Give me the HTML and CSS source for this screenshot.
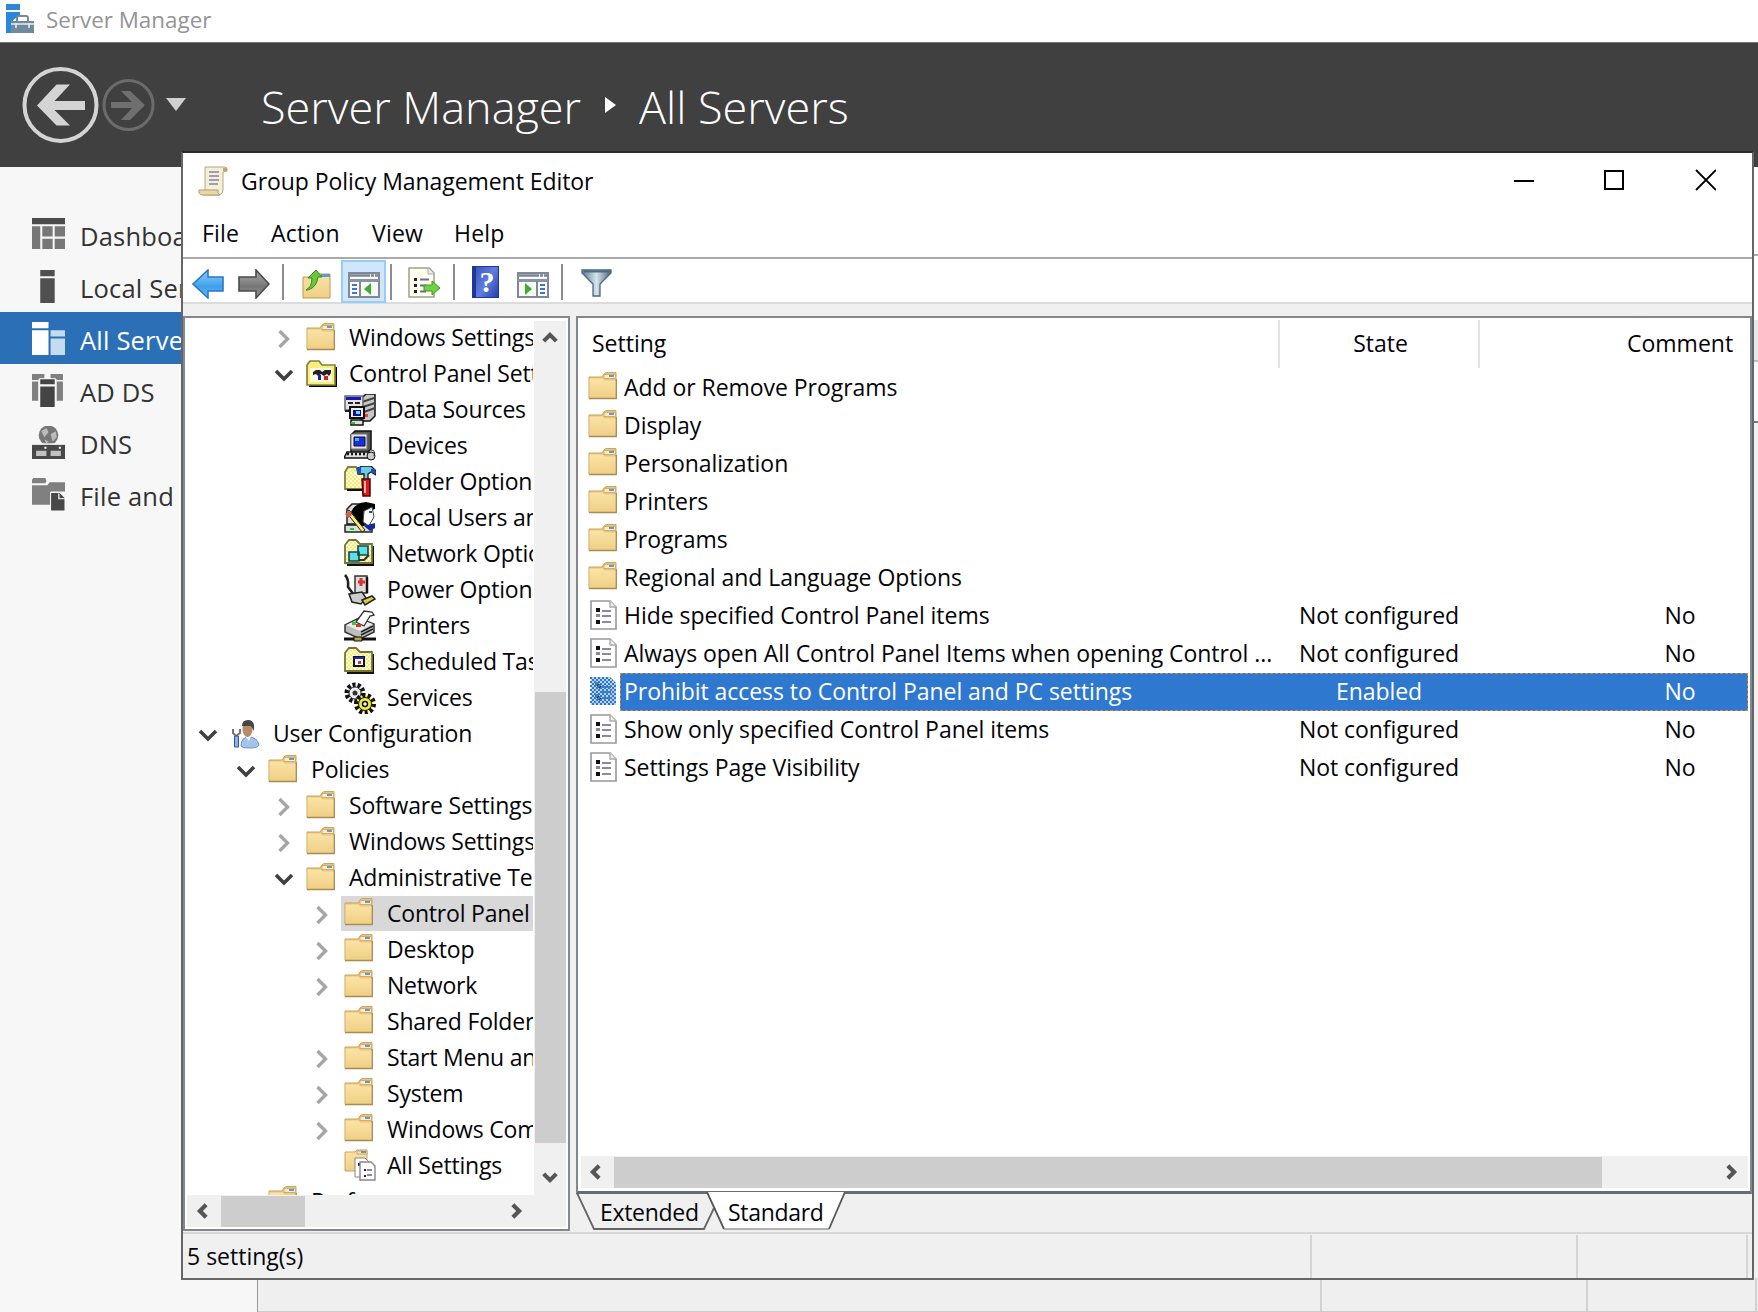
FILE: index.html
```html
<!DOCTYPE html>
<html lang="en">
<head>
<meta charset="utf-8">
<title>Server Manager</title>
<link rel="stylesheet" href="styles.css">
</head>
<body>
<svg class="defs" width="0" height="0" aria-hidden="true">
  <defs>
    <linearGradient id="g-folder" x1="0" y1="0" x2="0" y2="1"><stop offset="0" stop-color="#fbe3a6"/><stop offset="1" stop-color="#efcf85"/></linearGradient>
    <linearGradient id="g-blue" x1="0" y1="0" x2="0" y2="1"><stop offset="0" stop-color="#8fd0fb"/><stop offset=".6" stop-color="#3f9fea"/><stop offset="1" stop-color="#62c0f5"/></linearGradient>
    <linearGradient id="g-gray" x1="0" y1="0" x2="0" y2="1"><stop offset="0" stop-color="#a8a8a8"/><stop offset=".6" stop-color="#777"/><stop offset="1" stop-color="#999"/></linearGradient>
    <linearGradient id="g-funnel" x1="0" y1="0" x2="1" y2="0"><stop offset="0" stop-color="#5b7890"/><stop offset=".5" stop-color="#d5e4ee"/><stop offset="1" stop-color="#48637a"/></linearGradient>
    <pattern id="p-dots" width="4" height="4" patternUnits="userSpaceOnUse"><path fill="#f4ef72" d="M0 0h4v4H0z"/><path fill="#fffde0" d="M0 0h2v2H0zM2 2h2v2H2z"/></pattern>
    <pattern id="p-sel" width="4" height="4" patternUnits="userSpaceOnUse"><path fill="#2f78d0" d="M0 0h2v2H0zM2 2h2v2H2z"/></pattern>
    <symbol id="i-folder" viewBox="0 0 32 32"><path d="M1 6h13l2-3q1-1.500 3-1.500h9v26H1z" fill="#e8c67c" stroke="#c9a55e"/><path d="M16 3.500h11.500v4H16z" fill="#f8edd2" stroke="#d6ad62"/><path d="M21 4h5v2h-5z" fill="#5b9bd6"/><path d="M1.500 7.500h13l2 2h11.500V27H1.500z" fill="url(#g-folder)"/><path d="M28.300 8v19.500H1" fill="none" stroke="#a98b55" stroke-width="1.300"/></symbol>
    <symbol id="i-right" viewBox="0 0 20 20"><path d="M5.500 2l8 8-8 8" fill="none" stroke="#a6a6a6" stroke-width="3.400"/></symbol>
    <symbol id="i-down" viewBox="0 0 20 20"><path d="M2 6l8 8 8-8" fill="none" stroke="#404040" stroke-width="3.600"/></symbol>
    <symbol id="i-scroll" viewBox="0 0 20 20"><path d="M3 13.500l7-7 7 7" fill="none" stroke="#555" stroke-width="4.600"/></symbol>
    <symbol id="i-cpanel" viewBox="0 0 32 32"><path d="M3 29h28V9h-2v18H3z" fill="#000"/><path d="M1 7l3-4h9l3 4h13v20H1z" fill="#f4ef80" stroke="#84803a" stroke-width="1.700"/><path d="M4 10h22v14H4z" fill="#fffbd8"/><path d="M7 17v-3l3-2h4l2 2 3-2h6v3l-2 3-2-2-3 2-3-2-3 2-2-2z" fill="#222"/><path d="M12 17h3v5h-3z" fill="#1c1cc4"/><path d="M18 18h4v4h-4z" fill="#d81e1e"/></symbol>
    <symbol id="i-data" viewBox="0 0 32 32"><path d="M18 4l4-4h9v22l-5 5h-9z" fill="#c7c7c7" stroke="#111" stroke-width="1.500"/><path d="M18 8l12-4M19 13l12-4M20 18l11-4" stroke="#444" stroke-width="2"/><path d="M1 2h18v14H1z" fill="#e4e4e4" stroke="#666" stroke-width="1.500"/><path d="M2 3h15v3H2z" fill="#1818b8"/><path d="M4 9h5M11 9h5M1 17h8" stroke="#222" stroke-width="2"/><path d="M6 13h14v11H6z" fill="#eee" stroke="#111" stroke-width="2"/><path d="M9 16h8v6H9z" fill="#0a0a9a"/><path d="M12 17h4v3h-4z" fill="#5fe6f2"/><path d="M7 26h12v5H7z" fill="#ddd" stroke="#111" stroke-width="1.500"/><path d="M7 28h4v2H7z" fill="#2c2"/><path d="M21 20h3v3h-3z" fill="#f33"/></symbol>
    <symbol id="i-device" viewBox="0 0 32 32"><path d="M7 5l4-4h16v18l-4 4H7z" fill="#555" stroke="#111" stroke-width="1.500"/><path d="M7 4h16v15H7z" fill="#e4e4e4" stroke="#777"/><path d="M10 7h11v9H10z" fill="#1530e8" stroke="#112"/><path d="M11 8h4v3h-4z" fill="#58a8ff"/><path d="M3 22h22l2 6H0z" fill="#ddd" stroke="#111" stroke-width="1.500"/><path d="M3 24h23" stroke="#111" stroke-width="2.500" stroke-dasharray="2 2"/><circle cx="27" cy="26" r="4" fill="#ccc" stroke="#111"/><path d="M27 20q5 0 3 6" fill="none" stroke="#222"/></symbol>
    <symbol id="i-foldopt" viewBox="0 0 32 32"><path d="M1 6l3-5h8l3 4h7v18H1z" fill="url(#p-dots)" stroke="#84803a" stroke-width="1.800"/><path d="M3 24h17" stroke="#111" stroke-width="2"/><path d="M13 3l5-3h9l5 5v4l-5-3-3 2v6h-4V8h-6z" fill="#6ccbe4" stroke="#111" stroke-width="1.300"/><path d="M13 1h4v7h-4zM27 3h4v4h-4z" fill="#1c50c0"/><path d="M18 13h8v17h-7z" fill="#d51d1d" stroke="#500" stroke-width="1.500"/><path d="M21 15v12" stroke="#faa" stroke-width="2"/></symbol>
    <symbol id="i-users" viewBox="0 0 32 32"><path d="M3 7l5-5h14v20H3zM1 23h27v7H1z" fill="#ddd" stroke="#222" stroke-width="1.500"/><path d="M7 10q4-9 15-10l9 2v5l-8 3-3 14q-8-1-9-9z" fill="#000"/><path d="M20 9l8-4 2 10-3 5-2 4-6-4z" fill="#fff" stroke="#444"/><path d="M25 9h3v2h-3z" fill="#24c"/><path d="M20 24l11-3v5l-5 3z" fill="#122a9c"/><path d="M2 10l3-2 16 20-3 2z" fill="#f6ee67" stroke="#222"/><path d="M1 12l4-3 3 4-4 3z" fill="#d35a5a"/><path d="M6 26h4v2H6z" fill="#2c2"/></symbol>
    <symbol id="i-netopt" viewBox="0 0 32 32"><path d="M3 28h27V8h-3v16H3z" fill="#111"/><path d="M1 7l4-5h7l4 4h12v19H1z" fill="url(#p-dots)" stroke="#74743a" stroke-width="1.800"/><path d="M14 8h10v9H14zM5 14h10v9H5z" fill="#5fe0de" stroke="#145" stroke-width="1.600"/><path d="M15 22h5l5-5" fill="none" stroke="#333" stroke-width="2"/></symbol>
    <symbol id="i-power" viewBox="0 0 32 32"><path d="M1 1q4 4 3 12l6 8" fill="none" stroke="#222" stroke-width="2.600"/><path d="M11 2h12v17H11z" fill="#ddd" stroke="#333" stroke-width="1.500"/><path d="M23 3v16" stroke="#111" stroke-width="2.500"/><path d="M17 4v8M14 8h7" stroke="#e03030" stroke-width="3"/><path d="M5 20l13-2 4 6-5 6-9-2z" fill="#ccc" stroke="#222" stroke-width="1.500"/><path d="M18 26l10-4 3 3-10 6z" fill="#d7cd3d" stroke="#222" stroke-width="1.500"/></symbol>
    <symbol id="i-printer" viewBox="0 0 32 32"><path d="M1 15l14-7 15 6v8l-14 7L1 22z" fill="#bdbdbd" stroke="#333" stroke-width="1.500"/><path d="M2 15l13-6 14 5-13 7z" fill="#ededed"/><path d="M12 12l8-11 8 1 2 3-4 1-6 10z" fill="#fff" stroke="#333" stroke-width="1.300"/><path d="M17 22l12-6M17 25l12-6" stroke="#222" stroke-width="1.500"/><path d="M8 12h4v3H8z" fill="#2bd12b"/><path d="M12 14h5v3h-5z" fill="#e03030"/><path d="M0 29h32" stroke="#111" stroke-width="3"/><path d="M10 27h8v4h-8z" fill="#b4a53a" stroke="#111"/></symbol>
    <symbol id="i-tasks" viewBox="0 0 32 32"><path d="M3 28h27V8h-3v16H3z" fill="#111"/><path d="M1 7l4-5h7l4 4h12v19H1z" fill="url(#p-dots)" stroke="#74743a" stroke-width="1.800"/><path d="M10 11h10v9H10z" fill="#fff" stroke="#113" stroke-width="2"/><path d="M10 11h10v2H10z" fill="#1a2bb0"/><path d="M14 15h3v3h-3z" fill="#d33"/></symbol>
    <symbol id="i-gears" viewBox="0 0 32 32"><circle cx="11" cy="11" r="8" fill="#ddd" stroke="#111" stroke-width="5" stroke-dasharray="3 2"/><circle cx="11" cy="11" r="6" fill="#eee" stroke="#333"/><circle cx="11" cy="11" r="2.500" fill="#333"/><circle cx="21" cy="22" r="8.500" fill="#f2ea3c" stroke="#111" stroke-width="5" stroke-dasharray="3 2.300"/><circle cx="21" cy="22" r="6.500" fill="#f2ea3c" stroke="#111"/><circle cx="21" cy="22" r="2.500" fill="#fff" stroke="#111" stroke-width="1.500"/></symbol>
    <symbol id="i-user" viewBox="0 0 32 32"><path d="M11 28q0-9 8-9 8 0 10 8-1 3-9 3t-9-2z" fill="#a4c4ec" stroke="#6b92c6"/><path d="M15 18h6l-2 5z" fill="#fff"/><ellipse cx="17.500" cy="11" rx="5" ry="8" fill="#b98a66"/><path d="M12 8q0-6 6-6 5 0 6 5v6l-3-5z" fill="#464646"/><path d="M3 11v4l3 3 4-3v-4" fill="none" stroke="#777" stroke-width="2"/><path d="M4.500 18h4v11h-4z" fill="#8db0e8" stroke="#2f569f"/></symbol>
    <symbol id="i-doc" viewBox="0 0 32 32"><path d="M3 2h19l6 6v22H3z" fill="#fff" stroke="#989898" stroke-width="1.600"/><path d="M22 2v6h6" fill="#eee" stroke="#aaa" stroke-width="1.400"/><path d="M8 9h4v4H8zM8 21h4v4H8z" fill="#111"/><path d="M8 15h4v3H8z" fill="#8a86a4"/><path d="M14 12h9M14 17h9M14 23h9" stroke="#8c88a2" stroke-width="1.800"/></symbol>
    <symbol id="i-docsel" viewBox="0 0 32 32"><path d="M3 2h19l6 6v22H3z" fill="#bcd2ec"/><path d="M8 8l5 5M8 20l5 5" stroke="#123d73" stroke-width="3"/><path d="M14 12h9M14 17h9M14 23h9" stroke="#4c83bd" stroke-width="2"/><path d="M2 2h20l6 6v22H2z" fill="url(#p-sel)"/></symbol>
    <symbol id="i-all" viewBox="0 0 32 32"><path d="M1 3h10l2-2h10v21H1z" fill="url(#g-folder)" stroke="#c9a55e"/><path d="M13 2h10v3H13z" fill="#f7e8c2" stroke="#c9a55e"/><path d="M17 2h5v2h-5z" fill="#5b9bd6"/><path d="M11 9h10l4 4v15H11z" fill="#fff" stroke="#888"/><path d="M14 14h2v3h-2z" fill="#222"/><path d="M16 13h11l4 4v14H16z" fill="#fff" stroke="#888" stroke-width="1.400"/><path d="M20 20h2v2h-2zM20 26h2v2h-2z" fill="#222"/><path d="M23 21h5M23 26h5" stroke="#88a" stroke-width="2"/></symbol>
    <symbol id="i-pane" viewBox="0 0 32 26"><path d="M1 1h30v24H1z" fill="#fafafa" stroke="#808892" stroke-width="2"/><path d="M2 2h28v2H2z" fill="#e8ecf0"/><path d="M2 3.500h20M23 3.500h3M27 3.500h3" stroke="#7b8594" stroke-width="2.400"/><path d="M1 8.500h30" stroke="#8b95a2" stroke-width="3"/></symbol>
  </defs>
</svg>

<div class="desktop">
  <header class="titlebar">
    <svg class="app-icon" viewBox="0 0 30 30"><path d="M1 0h14v6H1zM1 8h14v4q-8 2-8 10v7H1z" fill="#2b88d8"/><path d="M6 17h23v12H6z" fill="#71899c"/><path d="M12 17v-3q0-2 2-2h7q2 0 2 2v3" fill="none" stroke="#71899c" stroke-width="2"/><path d="M6 20h23M11 19v5M24 19v5" stroke="#e8eef2" stroke-width="1.500"/></svg>
    <span class="app-name">Server Manager</span>
  </header>
  <nav class="banner">
    <svg class="nav-icons" viewBox="0 0 170 80" width="170" height="80"><circle cx="40.500" cy="40" r="36" fill="none" stroke="#d4d4d4" stroke-width="4"/><path d="M17 40.500L36.500 19.500H50L34.500 36H65v9H34.500L50 60.500H36.500z" fill="#d4d4d4"/><circle cx="108.500" cy="40" r="24.500" fill="none" stroke="#6b6b6b" stroke-width="3"/><path d="M125 40L110 55h-9l11-12H91v-6h21L101 26h9z" fill="#6f6f6f"/><path d="M146 33h20l-10 13z" fill="#d0d0d0"/></svg>
    <span class="crumb crumb-a">Server Manager</span>
    <svg class="crumb-sep" width="12" height="16" viewBox="0 0 12 16"><path d="M0 0l11 8-11 8z" fill="#fff"/></svg>
    <span class="crumb crumb-b">All Servers</span>
  </nav>
  <div class="workspace">
    <aside class="sidebar">
      <div class="side-item"><svg viewBox="0 0 32 32"><path d="M0 0h32v6H0z" fill="#4b4b4b"/><path d="M0 8h8v22H0zM10 8h10v10H10zM22 8h10v10H22zM10 20h10v10H10zM22 20h10v10H22z" fill="#777"/></svg><span>Dashboard</span></div>
      <div class="side-item"><svg viewBox="0 0 32 32"><path d="M8 0h14v6H8zM8 8h14v24H8z" fill="#505050"/></svg><span>Local Server</span></div>
      <div class="side-item active"><svg viewBox="0 0 32 32"><path d="M0 0h16v6H0zM0 8h16v24H0z" fill="#fff"/><path d="M18 8h14v6H18zM18 16h14v16H18z" fill="#c5dcee"/></svg><span>All Servers</span></div>
      <div class="side-item"><svg viewBox="0 0 32 32"><path d="M0 0h12v5H6v3h0v18H0zM18 0h12v26h-6V5h-6z" fill="#808080"/><path d="M7 4h16v29H7z" fill="#f7f7f7"/><path d="M8 5h14v5H8zM8 12h14v20H8z" fill="#444"/><path d="M0 6.500h6M24 6.500h6" stroke="#f7f7f7" stroke-width="1.500"/></svg><span>AD DS</span></div>
      <div class="side-item"><svg viewBox="0 0 32 32"><circle cx="16" cy="9" r="9.500" fill="#777"/><path d="M9 5l5-3 2 4-4 5zM18 8l5-3 1 6-4 4zM12 13l4 2-2 2z" fill="#bbb"/><path d="M0 18h32v14H0z" fill="#484848"/><path d="M0 17.500h32" stroke="#f7f7f7" stroke-width="1.500"/><path d="M4 24h10v5H4zM18 24h10v5H18z" fill="#c2c2c2"/><path d="M12 20h2v2h-2zM26 20h2v2h-2z" fill="#fff"/></svg><span>DNS</span></div>
      <div class="side-item"><svg viewBox="0 0 32 32"><path d="M1 0h12l1 3-1 2H0V2zM0 7h15l2-3h15v9H18v13H0z" fill="#808080"/><path d="M18 14h9l5 5v13H18z" fill="#484848" stroke="#f7f7f7"/><path d="M26 15v5h6" fill="none" stroke="#ddd" stroke-width="1.400"/></svg><span>File and Storage Services</span></div>
    </aside>
    <div class="backdrop">
      <div class="strip"><i class="s1"></i><i class="s2"></i><i class="s3"></i><i class="s4"></i></div>
      <div class="back-status"><i></i><i></i><i></i></div>
    </div>
  </div>

  <section class="window">
    <div class="win-title">
      <svg width="30" height="30" viewBox="0 0 30 30"><path d="M7 1h20q3 1 2 4l-4 1v18q0 4-4 5H6l1-6z" fill="#f6efd6" stroke="#b3a988"/><path d="M25 5V2l4-.500v4z" fill="#bba97a"/><path d="M1 24h19q-1 4 2 5H4q-4-1-3-5z" fill="#ead9a4" stroke="#a99c75"/><path d="M11 6h10M11 10h10M11 14h10M11 18h9" stroke="#8583ad" stroke-width="1.500"/></svg>
      <span class="win-name">Group Policy Management Editor</span>
      <svg class="win-buttons" width="202" height="22" viewBox="0 0 202 22"><path d="M0 12h20" stroke="#000" stroke-width="2"/><path d="M91 2h18v18H91z" fill="none" stroke="#000" stroke-width="2"/><path d="M182 1l20 20M202 1l-20 20" stroke="#000" stroke-width="1.800"/></svg>
    </div>
    <div class="menu"><span class="m1">File</span><span class="m2">Action</span><span class="m3">View</span><span class="m4">Help</span></div>
    <div class="toolbar">
      <svg class="t-back" width="32" height="30" viewBox="0 0 32 30"><path d="M1 15L16 1v7h15v14H16v7z" fill="url(#g-blue)" stroke="#2b78c0" stroke-width="1.600"/></svg>
      <svg class="t-fwd" width="32" height="30" viewBox="0 0 32 30"><path d="M31 15L18 1v7H1v14h17v7z" fill="url(#g-gray)" stroke="#4a4a4a" stroke-width="1.600"/></svg>
      <i class="sep p1"></i>
      <svg class="t-up" width="29" height="30" viewBox="0 0 29 30"><path d="M1 8h12l3-3h12v24H1z" fill="url(#g-folder)" stroke="#bd9850"/><path d="M19 5h9v3h-9z" fill="#5b9bd6"/><path d="M4 21q6-3 6-12H6l8-8 6 7h-4q-1 10-10 13z" fill="#66c93c" stroke="#2c8a1d"/></svg>
      <span class="t-on"><svg width="32" height="26" viewBox="0 0 32 26"><use href="#i-pane"/><path d="M12 9v16" stroke="#808892" stroke-width="2"/><path d="M4 13h5M4 17h5M4 21h5" stroke="#3c78c8" stroke-width="2"/><path d="M23 11v12l-7-6z" fill="#3fae2a"/></svg></span>
      <i class="sep p2"></i>
      <svg class="t-export" width="33" height="31" viewBox="0 0 33 31"><path d="M1 1h20l5 5v24H1z" fill="#fffff0" stroke="#a0a08c" stroke-width="1.500"/><path d="M20 1v6h6" fill="#eee" stroke="#aaa"/><path d="M6 11h3v3H6zM6 17h3v3H6zM6 23h3v3H6z" fill="#222"/><path d="M12 12.500h9M12 18.500h6M12 24.500h6" stroke="#6d6a94" stroke-width="2"/><path d="M16 18h8v-4l8 7-8 7v-4h-8z" fill="#6fd040" stroke="#3d9a22"/></svg>
      <i class="sep p3"></i>
      <span class="t-help">?</span>
      <svg class="t-pane2" width="32" height="26" viewBox="0 0 32 26"><use href="#i-pane"/><path d="M20 9v16" stroke="#808892" stroke-width="2"/><path d="M23 13h5M23 17h5M23 21h5" stroke="#3c78c8" stroke-width="2"/><path d="M8 11v12l7-6z" fill="#3fae2a"/></svg>
      <i class="sep p4"></i>
      <svg class="t-filter" width="31" height="29" viewBox="0 0 31 29"><path d="M1 1h29v3L19 15v12h-7V15L1 4z" fill="url(#g-funnel)" stroke="#4d687e" stroke-width="1.300"/><path d="M3 2.500h25" stroke="#4b6c88" stroke-width="2"/></svg>
    </div>
    <div class="panes">
      <div class="tree-pane">
        <div class="tree-main">
          <div class="tree">
            <div class="row l2"><svg class="ch"><use href="#i-right"/></svg><svg class="ic"><use href="#i-folder"/></svg><span>Windows Settings</span></div>
            <div class="row l2"><svg class="ch"><use href="#i-down"/></svg><svg class="ic"><use href="#i-cpanel"/></svg><span>Control Panel Settings</span></div>
            <div class="row l3"><svg class="ch"></svg><svg class="ic"><use href="#i-data"/></svg><span>Data Sources</span></div>
            <div class="row l3"><svg class="ch"></svg><svg class="ic"><use href="#i-device"/></svg><span>Devices</span></div>
            <div class="row l3"><svg class="ch"></svg><svg class="ic"><use href="#i-foldopt"/></svg><span>Folder Options</span></div>
            <div class="row l3"><svg class="ch"></svg><svg class="ic"><use href="#i-users"/></svg><span>Local Users and Groups</span></div>
            <div class="row l3"><svg class="ch"></svg><svg class="ic"><use href="#i-netopt"/></svg><span>Network Options</span></div>
            <div class="row l3"><svg class="ch"></svg><svg class="ic"><use href="#i-power"/></svg><span>Power Options</span></div>
            <div class="row l3"><svg class="ch"></svg><svg class="ic"><use href="#i-printer"/></svg><span>Printers</span></div>
            <div class="row l3"><svg class="ch"></svg><svg class="ic"><use href="#i-tasks"/></svg><span>Scheduled Tasks</span></div>
            <div class="row l3"><svg class="ch"></svg><svg class="ic"><use href="#i-gears"/></svg><span>Services</span></div>
            <div class="row l0"><svg class="ch"><use href="#i-down"/></svg><svg class="ic"><use href="#i-user"/></svg><span>User Configuration</span></div>
            <div class="row l1"><svg class="ch"><use href="#i-down"/></svg><svg class="ic"><use href="#i-folder"/></svg><span>Policies</span></div>
            <div class="row l2"><svg class="ch"><use href="#i-right"/></svg><svg class="ic"><use href="#i-folder"/></svg><span>Software Settings</span></div>
            <div class="row l2"><svg class="ch"><use href="#i-right"/></svg><svg class="ic"><use href="#i-folder"/></svg><span>Windows Settings</span></div>
            <div class="row l2"><svg class="ch"><use href="#i-down"/></svg><svg class="ic"><use href="#i-folder"/></svg><span>Administrative Templates</span></div>
            <div class="row l3 sel"><svg class="ch"><use href="#i-right"/></svg><svg class="ic"><use href="#i-folder"/></svg><span>Control Panel</span></div>
            <div class="row l3"><svg class="ch"><use href="#i-right"/></svg><svg class="ic"><use href="#i-folder"/></svg><span>Desktop</span></div>
            <div class="row l3"><svg class="ch"><use href="#i-right"/></svg><svg class="ic"><use href="#i-folder"/></svg><span>Network</span></div>
            <div class="row l3"><svg class="ch"></svg><svg class="ic"><use href="#i-folder"/></svg><span>Shared Folders</span></div>
            <div class="row l3"><svg class="ch"><use href="#i-right"/></svg><svg class="ic"><use href="#i-folder"/></svg><span>Start Menu and Taskbar</span></div>
            <div class="row l3"><svg class="ch"><use href="#i-right"/></svg><svg class="ic"><use href="#i-folder"/></svg><span>System</span></div>
            <div class="row l3"><svg class="ch"><use href="#i-right"/></svg><svg class="ic"><use href="#i-folder"/></svg><span>Windows Components</span></div>
            <div class="row l3"><svg class="ch"></svg><svg class="ic"><use href="#i-all"/></svg><span>All Settings</span></div>
            <div class="row l1"><svg class="ch"></svg><svg class="ic"><use href="#i-folder"/></svg><span>Preferences</span></div>
          </div>
          <div class="vscroll"><svg class="arr"><use href="#i-scroll"/></svg><div class="vthumb"></div><svg class="arr flip"><use href="#i-scroll"/></svg></div>
        </div>
        <div class="hscroll"><svg class="arr left"><use href="#i-scroll"/></svg><div class="hthumb"></div><svg class="arr to-right"><use href="#i-scroll"/></svg></div>
      </div>
      <div class="content">
        <div class="list-pane">
          <div class="list-head"><span class="c1">Setting</span><span class="c2">State</span><span class="c3">Comment</span></div>
          <div class="list">
            <div class="item"><svg><use href="#i-folder"/></svg><div class="cells"><span class="n">Add or Remove Programs</span></div></div>
            <div class="item"><svg><use href="#i-folder"/></svg><div class="cells"><span class="n">Display</span></div></div>
            <div class="item"><svg><use href="#i-folder"/></svg><div class="cells"><span class="n">Personalization</span></div></div>
            <div class="item"><svg><use href="#i-folder"/></svg><div class="cells"><span class="n">Printers</span></div></div>
            <div class="item"><svg><use href="#i-folder"/></svg><div class="cells"><span class="n">Programs</span></div></div>
            <div class="item"><svg><use href="#i-folder"/></svg><div class="cells"><span class="n">Regional and Language Options</span></div></div>
            <div class="item"><svg><use href="#i-doc"/></svg><div class="cells"><span class="n">Hide specified Control Panel items</span><span class="s">Not configured</span><span class="k">No</span></div></div>
            <div class="item"><svg><use href="#i-doc"/></svg><div class="cells"><span class="n">Always open All Control Panel Items when opening Control ...</span><span class="s">Not configured</span><span class="k">No</span></div></div>
            <div class="item chosen"><svg><use href="#i-docsel"/></svg><div class="cells"><span class="n">Prohibit access to Control Panel and PC settings</span><span class="s">Enabled</span><span class="k">No</span></div></div>
            <div class="item"><svg><use href="#i-doc"/></svg><div class="cells"><span class="n">Show only specified Control Panel items</span><span class="s">Not configured</span><span class="k">No</span></div></div>
            <div class="item"><svg><use href="#i-doc"/></svg><div class="cells"><span class="n">Settings Page Visibility</span><span class="s">Not configured</span><span class="k">No</span></div></div>
          </div>
          <div class="hscroll wide"><svg class="arr left"><use href="#i-scroll"/></svg><div class="hthumb"></div><svg class="arr to-right"><use href="#i-scroll"/></svg></div>
        </div>
        <div class="tabs">
          <svg class="tab-shape" width="272" height="39" viewBox="0 0 272 39"><path d="M1 1l17 36h110l10-21" fill="none" stroke="#666" stroke-width="1.800"/><path d="M131 0l17 37h105L269 0z" fill="#fff"/><path d="M131 0l17 37M253 37L269 0" fill="none" stroke="#555" stroke-width="1.800"/><path d="M148 37h105" stroke="#999" stroke-width="1.500"/></svg>
          <span class="tab a">Extended</span><span class="tab b">Standard</span>
        </div>
      </div>
    </div>
    <footer class="status"><span>5 setting(s)</span><i></i><i></i><i></i></footer>
  </section>
</div>
</body>
</html>
```
FILE: styles.css
```css
* { box-sizing: border-box; }
body { margin: 0; font-family: "Open Sans", "Noto Sans", sans-serif; font-size: 23px; font-stretch: 92%; color: #040408; background: #fff; }
.defs { position: absolute; }
.desktop { position: relative; width: 1758px; height: 1312px; overflow: hidden; display: flex; flex-direction: column; }
span { white-space: nowrap; }
svg { flex: none; display: block; }

.titlebar { height: 42px; display: flex; align-items: flex-start; padding: 4px 0 0 5px; }
.app-icon { width: 30px; height: 30px; }
.app-name { margin-left: 11px; line-height: 31px; color: #949494; font-size: 22.400px; }
.banner { height: 125px; background: #404040; border-top: 1px solid #777; display: flex; color: #fff; padding-left: 20px; }
.nav-icons { margin-top: 22px; }
.crumb { font-size: 45px; font-weight: 300; line-height: 60px; margin-top: 34px; }
.crumb-a { margin-left: 71px; width: 344px; }
.crumb-sep { margin-top: 54px; }
.crumb-b { margin-left: 22px; }

.workspace { flex: 1; display: flex; }
.sidebar { width: 257px; background: #f7f7f7; padding-top: 41px; }
.side-item { height: 52px; width: 182px; overflow: hidden; display: flex; align-items: center; padding-left: 32px; color: #333; font-size: 25.500px; font-stretch: 99%; letter-spacing: 0.200px; }
.side-item svg { width: 33px; height: 33px; }
.side-item span { margin-left: 15px; padding-top: 3px; }
.side-item.active { background: #2b70b7; color: #fff; }
.backdrop { flex: 1; border-left: 1px solid #999; background: #efefef; display: flex; flex-direction: column; align-items: flex-end; }
.strip { width: 4px; flex: 1; background: #f3f2f3; display: flex; flex-direction: column; }
.s1 { height: 89px; background: #fff; border-bottom: 2px solid #aaa; }
.s2 { height: 64px; background: #fff; }
.s3 { height: 42px; background: #e8e8e8; border-bottom: 2px solid #bbb; }
.s4 { height: 61px; background: #f8f8f8; border-bottom: 2px solid #777; }
.back-status { height: 34px; width: 100%; display: flex; border-bottom: 1px solid #ccc; }
.back-status i { border-right: 2px solid #d2d2d2; width: 266px; }
.back-status i:first-child { width: 1064px; }
.back-status i:last-child { width: 169px; }

.window { position: absolute; left: 181px; top: 151px; width: 1573px; height: 1129px; border: 2px solid #666; border-top-color: #2b2b2b; background: #f0f0f0; display: flex; flex-direction: column; }
.window > div { flex: none; }
.win-title { height: 56px; background: #fff; display: flex; padding: 13px 36px 0 15px; }
.win-name { margin-left: 13px; line-height: 31px; letter-spacing: -0.060px; }
.win-buttons { margin: 3px 0 0 auto; }
.menu { height: 50px; background: #fff; border-bottom: 2px solid #aaa; padding-left: 19px; display: flex; line-height: 49px; letter-spacing: 0.200px; }
.m1 { width: 69px; } .m2 { width: 101px; } .m3 { width: 82px; }
.toolbar { height: 45px; background: #fff; border-bottom: 2px solid #dcdcdc; display: flex; padding-left: 9px; }
.toolbar > svg { margin-top: 10px; }
.toolbar > .t-fwd { margin-left: 14px; }
.sep { width: 2px; height: 36px; background: #8c8c8c; margin-top: 5px; }
.p1 { margin-left: 12px; } .p2 { margin-left: 4px; } .p3 { margin-left: 12px; } .p4 { margin-left: 12px; }
.t-up { margin-left: 18px; }
.t-on { margin-left: 10px; width: 45px; height: 43px; margin-top: 1px; background: #d0e6fb; border: 2px solid #99cdf9; padding: 10px 0 0 5px; }
.toolbar > .t-export { margin: 8px 0 0 16px; }
.t-help { margin: 7px 0 0 17px; width: 27px; height: 32px; background: linear-gradient(120deg, #3c55b8, #607ee0 50%, #2440aa); border: 1px solid #20359a; border-left-width: 4px; color: #fff; font: bold 30px/30px "Liberation Serif", serif; text-align: center; }
.toolbar > .t-pane2 { margin: 13px 0 0 18px; }
.t-filter { margin-left: 18px; }

.panes { height: 916px; margin-top: 12px; display: flex; }
.tree-pane { width: 387px; height: 915px; border: 2px solid #828790; background: #fff; padding: 3px 2px 2px 2px; display: flex; flex-direction: column; }
.tree-main { height: 875px; display: flex; }
.tree { width: 346px; margin-top: -1px; height: 875px; overflow: hidden; letter-spacing: -0.200px; }
.row { height: 35.970px; display: flex; align-items: center; }
.row .ch { width: 20px; height: 20px; margin-top: 3px; margin-right: -1px; transform: translateX(1px); }
.row .ic { width: 32px; height: 32px; margin-left: 14px; }
.row span { margin-left: 11px; margin-top: -1px; }
.row.l0 { padding-left: 10px; } .row.l1 { padding-left: 48px; } .row.l2 { padding-left: 86px; } .row.l3 { padding-left: 124px; }
.row.sel { background: linear-gradient(90deg, transparent 154px, #d8d8d8 154px); }
.vscroll { width: 32px; margin-left: 1px; background: #f0f0f0; display: flex; flex-direction: column; align-items: center; }
.arr { width: 18px; height: 18px; }
.vscroll .arr { margin-top: 8px; }
.vscroll .flip { transform: rotate(180deg); margin-top: 25px; }
.vthumb { width: 31px; height: 451px; background: #cdcdcd; margin-top: 345px; }
.hscroll { height: 32px; background: #f0f0f0; display: flex; align-items: center; }
.hthumb { width: 84px; height: 31px; background: #cdcdcd; margin-left: 9px; }
.hscroll .left { transform: rotate(-90deg); margin-left: 7px; }
.hscroll .to-right { transform: rotate(90deg); margin-left: 202px; }
.content { flex: 1; margin-left: 6px; display: flex; flex-direction: column; }
.list-pane { height: 880px; border: 2px solid #828790; border-bottom: 3px solid #666b75; background: #fff; padding: 2px 2px 3px 3px; display: flex; flex-direction: column; }
.list-head { height: 49px; display: flex; line-height: 47px; padding-bottom: 1px; }
.c1 { width: 699px; padding-left: 11px; border-right: 2px solid #e3e3e3; }
.c2 { width: 200px; padding-left: 3px; text-align: center; border-right: 2px solid #e3e3e3; }
.c3 { padding-left: 147px; }
.list { flex: 1; letter-spacing: -0.050px; }
.item { height: 38px; display: flex; padding-left: 7px; }
.item > svg { width: 32px; height: 32px; margin-top: 2px; }
.cells { flex: 1; padding-left: 4px; display: flex; line-height: 37px; }
.n { width: 655px; }
.s { width: 200px; text-align: center; }
.k { width: 402px; text-align: center; margin-right: -202px; }
.chosen .cells { background: #2f78d0; color: #fff; outline: 1px dashed #c98a4a; outline-offset: -1px; }
.wide .left { margin-left: 6px; }
.wide .hthumb { width: 988px; }
.hscroll.wide .to-right { margin-left: 120px; }
.tabs { position: relative; height: 38px; }
.tab-shape { position: absolute; left: 0; top: -2px; }
.tab { position: absolute; top: 1px; line-height: 34px; letter-spacing: -0.300px; }
.tab.a { left: 24px; } .tab.b { left: 152px; }
.status { flex: 1; border-top: 2px solid #d7d7d7; display: flex; line-height: 43px; padding: 1px 0 1px 4px; }
.status span { width: 1123px; }
.status i { width: 266px; border-left: 2px solid #d4d4d4; }
.status i:nth-of-type(2) { width: 170px; }
.status i:nth-of-type(3) { width: 2px; }
```
